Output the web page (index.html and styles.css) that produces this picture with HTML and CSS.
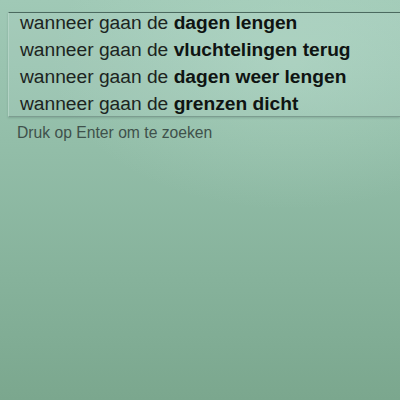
FILE: index.html
```html
<!DOCTYPE html>
<html lang="nl">
<head>
<meta charset="utf-8">
<title>Zoeksuggesties</title>
<link rel="stylesheet" href="styles.css">
</head>
<body>
<div class="screen">
  <div class="input-strip"></div>
  <ul class="suggestions">
    <li class="row">wanneer gaan de <b>dagen lengen</b></li>
    <li class="row">wanneer gaan de <b>vluchtelingen terug</b></li>
    <li class="row">wanneer gaan de <b>dagen weer lengen</b></li>
    <li class="row">wanneer gaan de <b>grenzen dicht</b></li>
  </ul>
  <p class="hint">Druk op Enter om te zoeken</p>
</div>
</body>
</html>
```

FILE: styles.css
```css
html, body {
  margin: 0;
  padding: 0;
  width: 400px;
  height: 400px;
  overflow: hidden;
}

body {
  background:
    radial-gradient(ellipse 240px 150px at 290px 60px, rgba(185, 222, 204, 0.4), rgba(185, 222, 204, 0) 100%),
    linear-gradient(to bottom, #a0c9b6 0%, #93bea9 35%, #86b29b 70%, #7ba78e 100%);
  font-family: "Liberation Sans", Arial, sans-serif;
}

.screen {
  width: 400px;
  height: 400px;
}

.input-strip {
  height: 12px;
}

.suggestions {
  list-style: none;
  margin: 0 0 0 8px;
  padding: 0 0 0 11px;
  height: 103px;
  border-top: 1px solid #4b6a5f;
  border-left: 1px solid #b3d3c5;
  border-bottom: 1px solid #7c9d90;
  background: rgba(220, 240, 232, 0.1);
  box-shadow: 0 1px 2px rgba(60, 90, 80, 0.25);
}

.row {
  height: 27px;
  line-height: 20px;
  font-size: 19.2px;
  color: #1c2421;
  white-space: nowrap;
}

.row:last-child {
  height: 22px;
}

.row b {
  font-weight: bold;
  color: #0f1412;
}

.hint {
  margin: 6px 0 0 17px;
  font-size: 15.7px;
  line-height: 20px;
  color: #3f514b;
}
```
